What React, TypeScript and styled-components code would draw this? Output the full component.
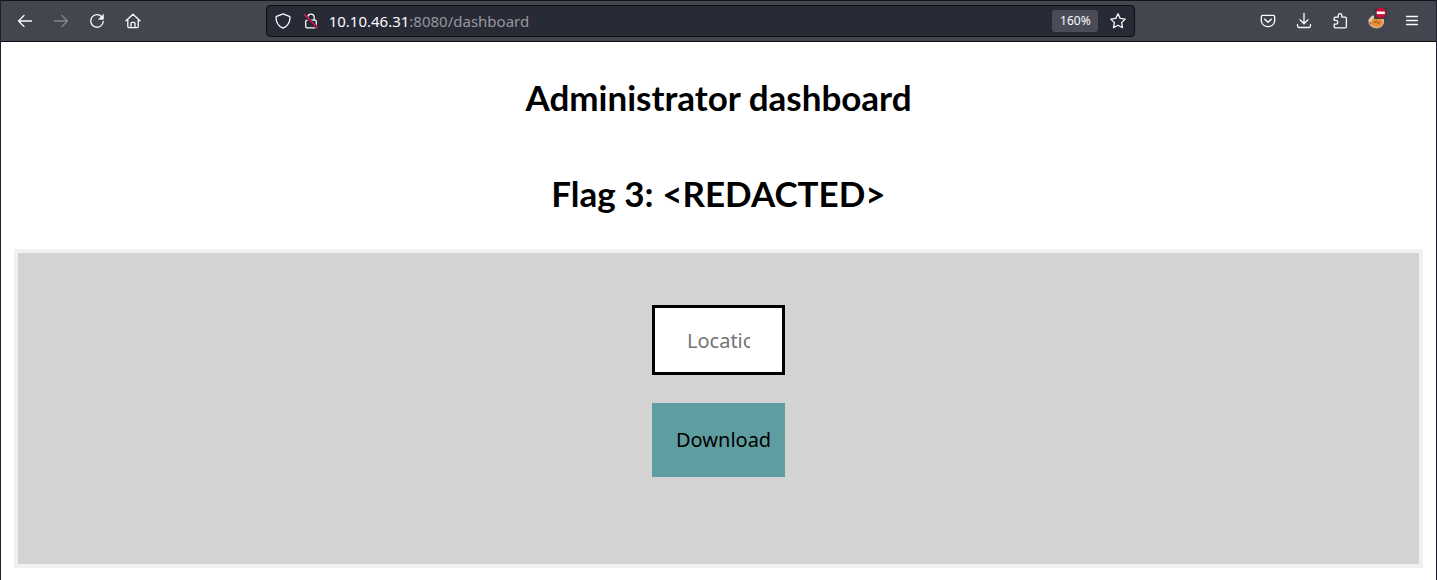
import React from 'react';
import styled, { createGlobalStyle } from 'styled-components';

const GlobalStyle = createGlobalStyle`
  * { box-sizing: border-box; }
  body { margin: 0; background: #fff; }
`;

const Window = styled.div`
  min-height: 100vh;
  border: solid #1f2130;
  border-width: 0 1px;
  font-family: "Noto Sans", sans-serif;
`;

const Toolbar = styled.header`
  display: flex;
  align-items: center;
  height: 42px;
  padding: 0 6px;
  background: #44464f;
  border-top: 1px solid #14151c;
  border-bottom: 1px solid #0c0d12;
`;

const Group = styled.nav`
  display: flex;
`;

const Spacer = styled.div`
  flex: 2 1 0;
`;

const ToolButton = styled.button`
  display: grid;
  place-items: center;
  width: 36px;
  height: 32px;
  padding: 0;
  border: 0;
  background: none;
  color: #fbfbfe;

  &:disabled { color: #85868c; }
`;

const AddressBar = styled.div`
  flex: 15 1 0;
  display: flex;
  align-items: center;
  min-width: 0;
  height: 32px;
  padding: 0 6px 0 2px;
  background: #282a36;
  border: 1px solid #0e0f15;
  border-radius: 4px;
`;

const BarButton = styled(ToolButton)`
  width: 28px;
  height: 28px;
  flex: none;
`;

const StarButton = styled(BarButton)`
  width: 20px;
  margin-left: 10px;
`;

const Address = styled.div`
  flex: 1;
  margin-left: 4px;
  overflow: hidden;
  white-space: nowrap;
  color: #97989e;
  font-size: 15px;
  line-height: 24px;
`;

const Host = styled.span`
  color: #fbfbfe;
`;

const Zoom = styled.button`
  width: 46px;
  height: 22px;
  padding: 0;
  border: 0;
  border-radius: 3px;
  background: #4a4c57;
  color: #fbfbfe;
  font: 12px/22px "Noto Sans", sans-serif;
`;

const Page = styled.main`
  padding: 32px 13px 12px;
`;

const Headings = styled.div`
  display: flex;
  flex-direction: column;
  gap: 50px;
  margin-bottom: 33px;
`;

const Title = styled.h1`
  margin: 0;
  color: #000;
  font: bold 35px/46px Lato, sans-serif;
  text-align: center;
`;

const Panel = styled.form`
  display: flex;
  flex-direction: column;
  align-items: center;
  gap: 28px;
  padding: 52px 0 87px;
  background: #d3d3d3;
  border: 4px solid #f0f0f0;
`;

const LocationInput = styled.input`
  width: 133px;
  height: 70px;
  padding: 0 32px;
  border: 3px solid #000;
  border-radius: 0;
  background: #fff;
  color: #000;
  font: 20px/28px "Noto Sans", sans-serif;

  &::placeholder { color: #757575; opacity: 1; }
`;

const DownloadButton = styled.button`
  width: 133px;
  height: 74px;
  padding: 0 0 0 24px;
  border: 0;
  background: #5f9ea0;
  color: #000;
  font: 20px/28px "Noto Sans", sans-serif;
  text-align: left;
  white-space: nowrap;
`;

const Icon = styled.svg.attrs({ viewBox: '0 0 16 16', 'aria-hidden': true })`
  display: block;
  width: 16px;
  height: 16px;
  overflow: visible;
  fill: none;
  stroke: currentColor;
  stroke-width: 1.3;
  stroke-linecap: round;
  stroke-linejoin: round;
`;

const ExtensionIcon = () => (
  <Icon>
    <ellipse cx="8.2" cy="8.4" rx="7.8" ry="6.4" fill="#d9d3c4" stroke="none" />
    <path d="M1 8.5h14.8c0 4-3 7-7 7s-7.8-3-7.8-7z" fill="#dda476" stroke="none" />
    <ellipse cx="9" cy="8.8" rx="5.6" ry="4.4" fill="#f28c28" stroke="none" />
    <path d="M6 9.2l3-1M9.5 10.2l2-.6" stroke="#62564a" strokeWidth="1" />
    <path d="M1 6l2-3M1.5 9l2 2" stroke="#a34637" strokeWidth="1" />
    <rect x="6" y="-5" width="13" height="11" rx="1" fill="#3b3d45" stroke="none" />
    <circle cx="12.8" cy="-.2" r="5.2" fill="#c50f35" stroke="none" />
    <path d="M8.8-.2h8" stroke="#fff" strokeWidth="2.6" strokeLinecap="butt" />
  </Icon>
);

export default function App() {
  return (
    <>
      <GlobalStyle />
      <Window>
        <Toolbar>
          <Group aria-label="Navigation">
            <ToolButton aria-label="Back">
              <Icon><path d="M14.5 8H1.5M7 2.5L1.5 8 7 13.5" /></Icon>
            </ToolButton>
            <ToolButton aria-label="Forward" disabled>
              <Icon><path d="M1.5 8h13M9 2.5L14.5 8 9 13.5" /></Icon>
            </ToolButton>
            <ToolButton aria-label="Reload">
              <Icon>
                <path d="M12.6 3.6A6.3 6.3 0 1 0 14.3 8.5" />
                <path d="M14.3 1.8v4.4H9.9z" fill="currentColor" strokeWidth=".8" />
              </Icon>
            </ToolButton>
            <ToolButton aria-label="Home">
              <Icon>
                <path d="M1 7.8L8 1.2l7 6.6M2.8 6.3v7.2c0 .7.4 1.1 1.1 1.1h8.2c.7 0 1.1-.4 1.1-1.1V6.3" />
                <path d="M6 14.4v-3.9c0-.7.4-1.1 1.1-1.1h1.8c.7 0 1.1.4 1.1 1.1v3.9" />
              </Icon>
            </ToolButton>
          </Group>
          <Spacer />
          <AddressBar>
            <BarButton aria-label="Tracking protection">
              <Icon>
                <path d="M8 .8l6.4 2.6c.4.2.6.5.6.9C15 9 13.2 13 8 15.2 2.8 13 1 9 1 4.3c0-.4.2-.7.6-.9z" />
              </Icon>
            </BarButton>
            <BarButton aria-label="Connection not secure">
              <Icon>
                <path d="M4.8 7V4.4a3.2 3.2 0 0 1 6.4 0V7M4 7.2h8c.9 0 1.3.4 1.3 1.3v5c0 .9-.4 1.3-1.3 1.3H4c-.9 0-1.3-.4-1.3-1.3v-5c0-.9.4-1.3 1.3-1.3z" />
                <path d="M1.5 2l13 13" stroke="#282a36" strokeWidth="3" />
                <path d="M1.5 1.5l13 13.2" stroke="#e3164d" strokeWidth="1.4" />
              </Icon>
            </BarButton>
            <Address><Host>10.10.46.31</Host>:8080/dashboard</Address>
            <Zoom type="button">160%</Zoom>
            <StarButton aria-label="Bookmark this page">
              <Icon>
                <path d="M8 .8l2.2 4.6 5 .7-3.6 3.5.9 5.1L8 12.3l-4.5 2.4.9-5.1L.8 6.1l5-.7z" />
              </Icon>
            </StarButton>
          </AddressBar>
          <Spacer />
          <Group aria-label="Browser tools">
            <ToolButton aria-label="Save to Pocket">
              <Icon>
                <path d="M2.7 2.4h10.6c.9 0 1.4.6 1.4 1.4v3.6a6.7 6.3 0 0 1-13.4 0V3.8c0-.8.5-1.4 1.4-1.4z" />
                <path d="M4.7 6.2L8 9.3l3.3-3.1" strokeWidth="1.5" />
              </Icon>
            </ToolButton>
            <ToolButton aria-label="Downloads">
              <Icon>
                <path d="M8 .5v10M4 6.7l4 4 4-4M1.5 11.5v1.3c0 1 .7 1.7 1.7 1.7h9.6c1 0 1.7-.7 1.7-1.7v-1.3" />
              </Icon>
            </ToolButton>
            <ToolButton aria-label="Extensions">
              <Icon>
                <path d="M2.2 7V5.3c0-.7.4-1.1 1.1-1.1h3V2.4a1.8 1.8 0 0 1 3.6 0v1.8h3.3c.8 0 1.2.4 1.2 1.2v8.2c0 .8-.4 1.2-1.2 1.2H3.3c-.7 0-1.1-.4-1.1-1.1v-2.6h1.7a1.8 1.8 0 0 0 0-3.7H2.2z" />
              </Icon>
            </ToolButton>
            <ToolButton aria-label="Blocking extension"><ExtensionIcon /></ToolButton>
            <ToolButton aria-label="Open menu">
              <Icon><path d="M2.5 3.5h11M2.5 7.5h11M2.5 11.5h11" /></Icon>
            </ToolButton>
          </Group>
        </Toolbar>
        <Page>
          <Headings>
            <Title>Administrator dashboard</Title>
            <Title as="h2">Flag 3: &lt;REDACTED&gt;</Title>
          </Headings>
          <Panel onSubmit={(event: React.FormEvent) => event.preventDefault()}>
            <LocationInput type="text" aria-label="Location" placeholder="Location" />
            <DownloadButton type="submit">Download</DownloadButton>
          </Panel>
        </Page>
      </Window>
    </>
  );
}
